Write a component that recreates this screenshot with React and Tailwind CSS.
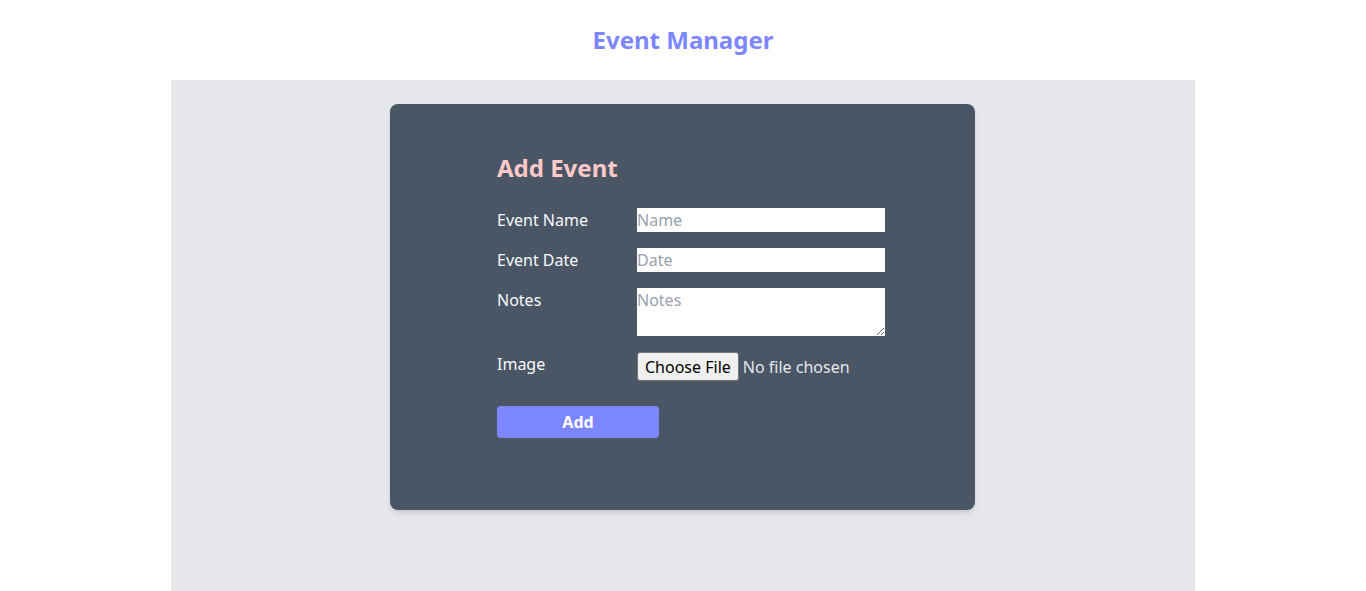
import React, { useState } from 'react';

const font = { fontFamily: '"Noto Sans", "Open Sans", sans-serif' };

const Field = ({ label, children, top }) => (
  <div className={`flex ${top ? 'items-start' : 'items-center'} mb-4`}>
    <label className="w-[140px] shrink-0 text-base text-gray-50 leading-6">{label}</label>
    {children}
  </div>
);

const App = () => {
  const [name, setName] = useState('');
  const [date, setDate] = useState('');
  const [notes, setNotes] = useState('');

  return (
    <div className="flex flex-col h-screen bg-white" style={font}>
      <header className="h-20 shrink-0 flex items-center justify-center">
        <h1 className="text-2xl font-bold text-indigo-400">Event Manager</h1>
      </header>
      <main className="flex-1 w-[1024px] mx-auto bg-gray-200 pt-6">
        <div className="w-[585px] ml-[219px] bg-gray-600 rounded-lg shadow-md pl-[107px] pr-[90px] pt-12 pb-[72px]">
          <h2 className="text-2xl font-bold text-red-200 mb-6 leading-8">Add Event</h2>
          <form onSubmit={(e) => e.preventDefault()}>
            <Field label="Event Name">
              <input
                type="text"
                placeholder="Name"
                value={name}
                onChange={(e) => setName(e.target.value)}
                className="w-[248px] h-6 bg-white text-base text-gray-800 placeholder:text-gray-400 outline-none"
              />
            </Field>
            <Field label="Event Date">
              <input
                type="text"
                placeholder="Date"
                value={date}
                onChange={(e) => setDate(e.target.value)}
                className="w-[248px] h-6 bg-white text-base text-gray-800 placeholder:text-gray-400 outline-none"
              />
            </Field>
            <Field label="Notes" top>
              <textarea
                placeholder="Notes"
                value={notes}
                onChange={(e) => setNotes(e.target.value)}
                className="w-[248px] h-12 bg-white text-base leading-6 text-gray-800 placeholder:text-gray-400 outline-none block"
              />
            </Field>
            <div className="flex items-start mb-[25px]">
              <label className="w-[140px] shrink-0 text-base text-gray-50 leading-6">Image</label>
              <input
                type="file"
                className="text-base text-gray-200 file:mr-1 file:h-[29px] file:px-[7px] file:bg-[#efefef] file:text-black file:border file:border-[#767676] file:rounded-[3px]"
              />
            </div>
            <button
              type="submit"
              className="w-[162px] h-8 rounded bg-indigo-400 text-white font-bold text-base"
            >
              Add
            </button>
          </form>
        </div>
      </main>
    </div>
  );
};

export default App;
